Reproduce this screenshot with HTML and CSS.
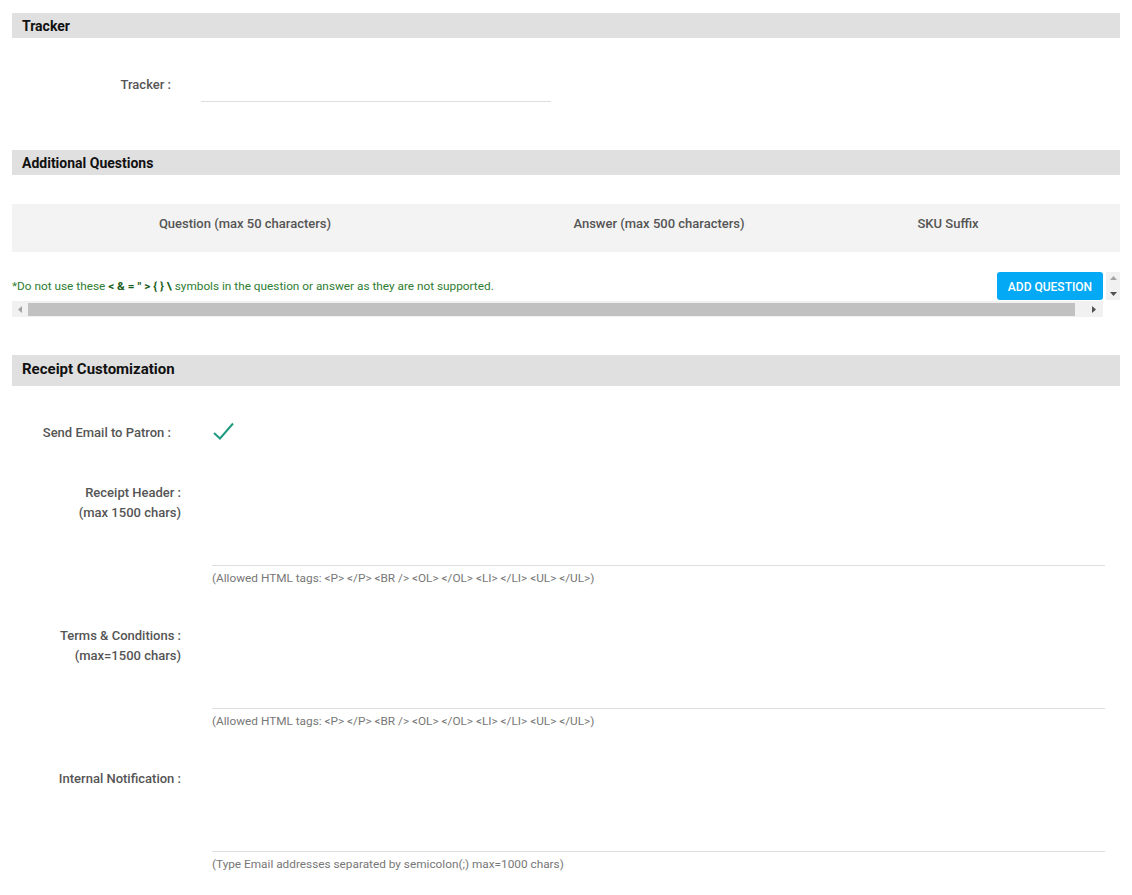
FILE: index.html
```html
<!DOCTYPE html>
<html lang="en">
<head>
    <meta charset="UTF-8">
    <title>Tracker &amp; Receipt Settings</title>
    <link rel="stylesheet" href="styles.css">
</head>
<body>
    <div class="page">
        <!-- Tracker -->
        <section class="panel">
            <h2 class="panel-title">Tracker</h2>
            <div class="tracker-row">
                <label class="tracker-label" for="tracker">Tracker :</label>
                <input type="text" id="tracker" class="line-input tracker-input">
            </div>
        </section>

        <!-- Additional Questions -->
        <section class="panel panel-questions">
            <h2 class="panel-title">Additional Questions</h2>
            <div class="questions-head">
                <div class="qcol">Question (max 50 characters)</div>
                <div class="qcol">Answer (max 500 characters)</div>
                <div class="qcol">SKU Suffix</div>
                <div class="qcol"></div>
            </div>
            <div class="questions-note">
                <p class="note">*Do not use these <b>&lt; &amp; = " &gt; { } \</b> symbols in the question or answer as they are not supported.</p>
                <button type="button" class="btn-add">ADD QUESTION</button>
                <div class="vscroll">
                    <svg width="7" height="4" viewBox="0 0 7 4"><path d="M0 4 L3.5 0 L7 4 Z" fill="#a3a3a3"/></svg>
                    <svg width="7" height="4" viewBox="0 0 7 4"><path d="M0 0 L3.5 4 L7 0 Z" fill="#505050"/></svg>
                </div>
            </div>
            <div class="hscroll">
                <span class="hscroll-btn">
                    <svg width="4" height="7" viewBox="0 0 4 7"><path d="M4 0 L0 3.5 L4 7 Z" fill="#a3a3a3"/></svg>
                </span>
                <span class="hscroll-thumb"></span>
                <span class="hscroll-btn hscroll-btn-right">
                    <svg width="4" height="7" viewBox="0 0 4 7"><path d="M0 0 L4 3.5 L0 7 Z" fill="#505050"/></svg>
                </span>
            </div>
        </section>

        <!-- Receipt Customization -->
        <section class="panel panel-receipt">
            <h2 class="panel-title panel-title-lg">Receipt Customization</h2>

            <div class="field-row">
                <div class="field-label field-label-short">Send Email to Patron :</div>
                <div class="field-body">
                    <svg class="check" width="24" height="20" viewBox="0 0 24 20">
                        <path d="M2 12 L8 17.5 L21 2.5" fill="none" stroke="#1f9a80" stroke-width="2"/>
                    </svg>
                </div>
            </div>

            <div class="field-row">
                <div class="field-label">Receipt Header :<br>(max 1500 chars)</div>
                <div class="field-body">
                    <textarea class="line-input area"></textarea>
                    <div class="hint">(Allowed HTML tags: &lt;P&gt; &lt;/P&gt; &lt;BR /&gt; &lt;OL&gt; &lt;/OL&gt; &lt;LI&gt; &lt;/LI&gt; &lt;UL&gt; &lt;/UL&gt;)</div>
                </div>
            </div>

            <div class="field-row">
                <div class="field-label">Terms &amp; Conditions :<br>(max=1500 chars)</div>
                <div class="field-body">
                    <textarea class="line-input area"></textarea>
                    <div class="hint">(Allowed HTML tags: &lt;P&gt; &lt;/P&gt; &lt;BR /&gt; &lt;OL&gt; &lt;/OL&gt; &lt;LI&gt; &lt;/LI&gt; &lt;UL&gt; &lt;/UL&gt;)</div>
                </div>
            </div>

            <div class="field-row">
                <div class="field-label">Internal Notification :</div>
                <div class="field-body">
                    <textarea class="line-input area"></textarea>
                    <div class="hint">(Type Email addresses separated by semicolon(;) max=1000 chars)</div>
                </div>
            </div>
        </section>
    </div>
</body>
</html>
```

FILE: styles.css
```css
/* Estilo geral */
body {
    margin: 0;
    font-family: Roboto, "Liberation Sans", Arial, sans-serif;
    color: #555;
    background: #fff;
}

.page {
    padding: 13px 12px 0 12px;
}

/* Barras de título */
.panel-title {
    margin: 0;
    height: 25px;
    line-height: 26px;
    padding-left: 10px;
    background: #e0e0e0;
    color: #111;
    font-size: 14px;
    font-weight: 700;
}

.panel-title-lg {
    height: 31px;
    line-height: 29px;
    font-size: 15px;
}

/* Campos com linha inferior */
.line-input {
    display: block;
    box-sizing: border-box;
    border: 0;
    border-bottom: 1px solid #ddd;
    background: transparent;
    font-family: inherit;
    font-size: 13px;
    outline: none;
    resize: none;
}

/* Tracker */
.tracker-row {
    display: flex;
    gap: 30px;
    margin-top: 29px;
}

.tracker-label {
    width: 159px;
    text-align: right;
    line-height: 35px;
    font-size: 13px;
    font-weight: 500;
}

.tracker-input {
    width: 350px;
    height: 35px;
}

/* Perguntas adicionais */
.panel-questions {
    margin-top: 48px;
}

.questions-head {
    display: grid;
    grid-template-columns: 466px 362px 216px 1fr;
    margin-top: 29px;
    height: 48px;
    background: #f3f3f3;
}

.qcol {
    text-align: center;
    line-height: 39px;
    font-size: 13px;
    font-weight: 500;
}

.questions-note {
    display: flex;
    align-items: center;
    margin-top: 20px;
}

.note {
    flex: 1;
    margin: 0;
    color: #2e7d32;
    font-size: 11.8px;
}

.note b {
    color: #1b5e20;
}

.btn-add {
    width: 106px;
    height: 28px;
    margin-right: 3px;
    border: 0;
    border-radius: 3px;
    background: #03a9f4;
    color: #fff;
    font-family: inherit;
    font-size: 12px;
    font-weight: 500;
    padding: 2px 0 0;
}

.vscroll {
    display: flex;
    flex-direction: column;
    justify-content: space-between;
    align-items: center;
    width: 14px;
    height: 28px;
    padding: 4px 0;
    box-sizing: border-box;
    background: #f1f1f1;
}

.vscroll svg {
    display: block;
}

.hscroll {
    display: flex;
    align-items: center;
    width: 1091px;
    height: 16px;
    margin-top: 1px;
    background: #f1f1f1;
}

.hscroll-btn {
    display: flex;
    align-items: center;
    justify-content: center;
    width: 16px;
    height: 16px;
}

.hscroll-btn-right {
    margin-left: auto;
    width: 18px;
}

.hscroll-thumb {
    width: 1047px;
    height: 13px;
    background: #c1c1c1;
}

/* Personalização do recibo */
.panel-receipt {
    margin-top: 38px;
}

.panel-receipt .panel-title {
    margin-bottom: 37px;
}

.field-row {
    display: flex;
    gap: 31px;
    margin-bottom: 40px;
    padding-right: 15px;
}

.field-label {
    width: 169px;
    flex-shrink: 0;
    text-align: right;
    line-height: 20px;
    font-size: 13px;
    font-weight: 500;
}

.field-label-short {
    padding-right: 10px;
    box-sizing: border-box;
}

.field-body {
    flex: 1;
}

.check {
    display: block;
    margin-top: -2px;
}

.area {
    width: 100%;
    height: 83px;
}

.hint {
    margin-top: 5px;
    line-height: 15px;
    font-size: 11.8px;
    color: #777;
}
```
